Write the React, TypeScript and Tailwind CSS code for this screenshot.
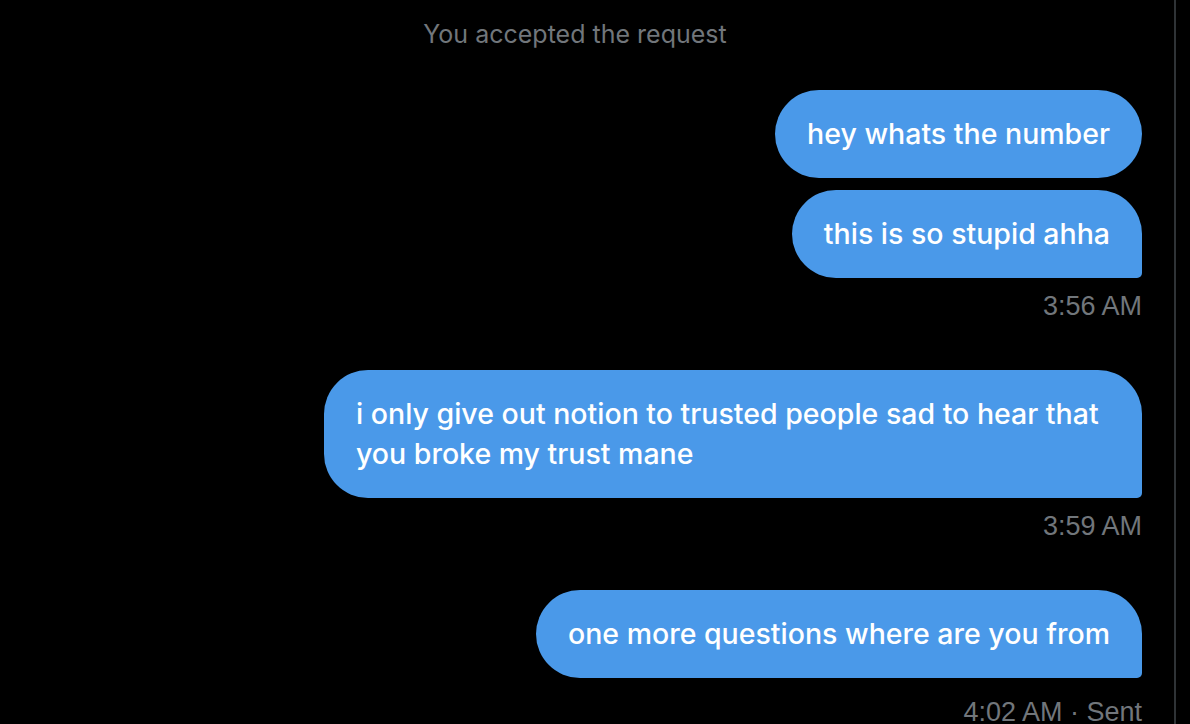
const Bubble = ({ text, tail }: { text: string; tail?: boolean }) => (
  <div
    className={`max-w-[818px] bg-[#4a99e9] text-white px-8 py-6 text-[28.5px] font-medium leading-[40px] rounded-[44px] ${
      tail ? "rounded-br-[5px]" : ""
    }`}
  >
    {text}
  </div>
);

const Stamp = ({ children }: { children: React.ReactNode }) => (
  <div className="text-[#71767b] text-[27px] leading-[32px] font-['Liberation_Sans',Arial,sans-serif]">
    {children}
  </div>
);

export default function App() {
  return (
    <div className="bg-black w-[1190px] h-[724px] overflow-hidden font-['Inter',sans-serif]">
      <div className="w-[1176px] h-full border-r-2 border-[#2f3336] flex flex-col items-end pr-8">
        <div className="self-stretch text-center pl-2 pt-[18px] text-[#71767b] text-[25px] leading-[32px]">
          You accepted the request
        </div>

        <div className="mt-[40px] flex flex-col items-end gap-3">
          <Bubble text="hey whats the number" />
          <Bubble text="this is so stupid ahha" tail />
        </div>
        <div className="mt-3">
          <Stamp>3:56 AM</Stamp>
        </div>

        <div className="mt-[48px]">
          <Bubble text="i only give out notion to trusted people sad to hear that you broke my trust mane" tail />
        </div>
        <div className="mt-3">
          <Stamp>3:59 AM</Stamp>
        </div>

        <div className="mt-[48px]">
          <Bubble text="one more questions where are you from" tail />
        </div>
        <div className="mt-[18px]">
          <Stamp>4:02 AM · Sent</Stamp>
        </div>
      </div>
    </div>
  );
}
